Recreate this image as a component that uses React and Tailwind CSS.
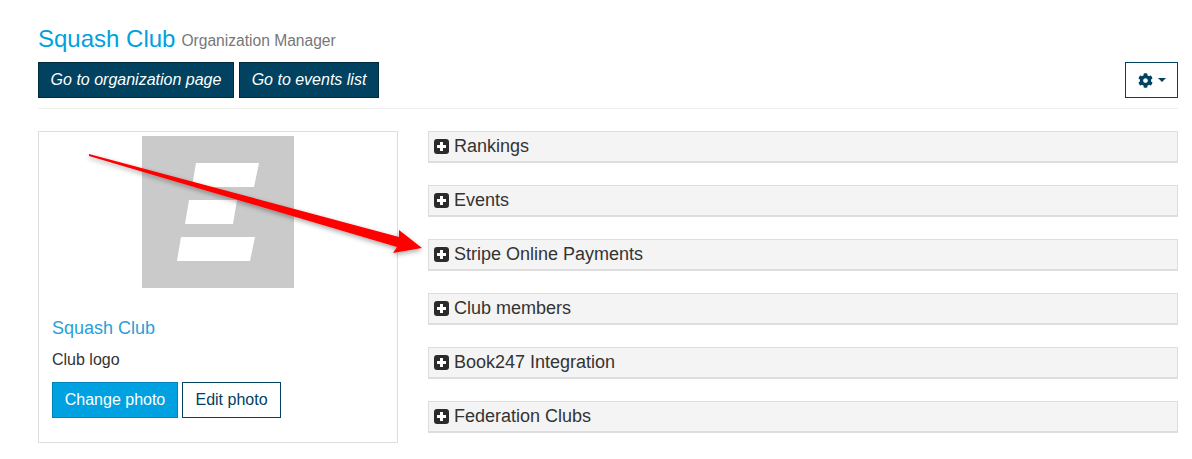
import { FaCog } from "react-icons/fa";

const sections = [
  "Rankings",
  "Events",
  "Stripe Online Payments",
  "Club members",
  "Book247 Integration",
  "Federation Clubs",
];

function Logo() {
  return (
    <svg width="152" height="152" viewBox="0 0 152 152" className="block">
      <rect width="152" height="152" fill="#cacaca" />
      <polygon points="54,27 117,27 112,51 50,51" fill="#fff" />
      <polygon points="47,64 95,64 91,88 43,88" fill="#fff" />
      <polygon points="39,101 113,101 108,125 35,125" fill="#fff" />
    </svg>
  );
}

function PlusIcon() {
  return (
    <svg width="15" height="15" viewBox="0 0 15 15" className="shrink-0">
      <rect width="15" height="15" rx="3" fill="#2b2b2b" />
      <path d="M6 3h3v3h3v3H9v3H6V9H3V6h3z" fill="#fff" />
    </svg>
  );
}

function Arrow() {
  return (
    <svg width="1192" height="459" className="absolute top-0 left-0 pointer-events-none">
      <defs>
        <filter id="arrowShadow" x="-10%" y="-30%" width="120%" height="160%">
          <feDropShadow dx="0" dy="2" stdDeviation="2.5" floodColor="#000" floodOpacity="0.35" />
        </filter>
      </defs>
      <polygon
        points="89,154 399,237 399,230 422,248 393,253 397,247 89,156"
        fill="#ff0000"
        filter="url(#arrowShadow)"
      />
    </svg>
  );
}

export default function App() {
  return (
    <div className="relative h-[459px] w-[1192px] overflow-hidden bg-white font-['Liberation_Sans',Arial,sans-serif] text-[#333]">
      <div className="px-[38px] pt-[24px] pr-[14px]">
        <div className="flex items-start h-[29px]">
          <span className="text-[24px] leading-[29px] text-[#00a1e0]">Squash Club</span>
          <span className="ml-[6px] mt-[2px] text-[15.6px] leading-[29px] text-[#777]">Organization Manager</span>
        </div>

        <div className="mt-[9px] flex justify-between border-b border-[#eee] pb-[10px]">
          <div className="flex gap-[5px]">
            <button className="h-9 w-[196px] border border-[#002b3d] bg-[#00425f] text-[16px] italic text-white">
              Go to organization page
            </button>
            <button className="h-9 w-[140px] border border-[#002b3d] bg-[#00425f] text-[16px] italic text-white">
              Go to events list
            </button>
          </div>
          <button className="flex h-9 w-[53px] items-center justify-center gap-[5px] border border-[#00425f] bg-white text-[#00425f]">
            <FaCog className="text-[15px]" />
            <span className="border-x-[4px] border-t-[4px] border-x-transparent border-t-[#00425f]" />
          </button>
        </div>

        <div className="mt-[22px] flex gap-[30px]">
          <div className="h-[312px] w-[360px] shrink-0 border border-[#ddd] px-[13px] pt-[4px]">
            <div className="flex justify-center">
              <Logo />
            </div>
            <div className="mt-[29px] text-[18px] leading-[22px] text-[#2a9fd6]">Squash Club</div>
            <div className="mt-[11px] text-[16px] leading-5">Club logo</div>
            <div className="mt-[12px] flex gap-1">
              <button className="h-9 w-[126px] border border-[#0085ba] bg-[#00a1e0] text-[16px] text-white">
                Change photo
              </button>
              <button className="h-9 w-[99px] border border-[#00425f] bg-white text-[16px] text-[#00425f]">
                Edit photo
              </button>
            </div>
          </div>

          <div className="flex flex-1 flex-col gap-[22px]">
            {sections.map((name) => (
              <div
                key={name}
                className="flex h-[32px] items-center gap-[5px] border border-b-[2px] border-[#ddd] bg-[#f4f4f4] pl-[5px] text-[18px] text-[#333]"
              >
                <PlusIcon />
                <span>{name}</span>
              </div>
            ))}
          </div>
        </div>
      </div>
      <Arrow />
    </div>
  );
}
